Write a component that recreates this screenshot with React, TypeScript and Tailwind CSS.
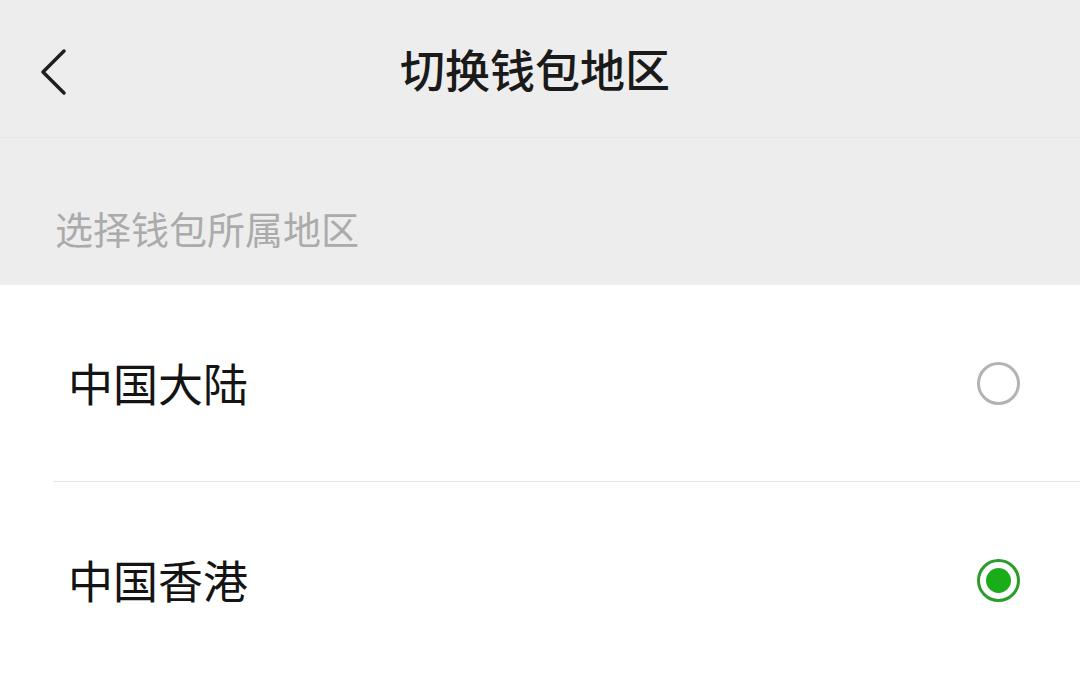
const regions = [
  { name: '中国大陆', selected: false },
  { name: '中国香港', selected: true },
]

function BackIcon() {
  return (
    <svg width="30" height="48" viewBox="0 0 30 48" fill="none">
      <path d="M26 3 L5 24 L26 45" stroke="#1f1f1f" strokeWidth="3.5" strokeLinecap="round" strokeLinejoin="round" />
    </svg>
  )
}

function Radio({ selected }: { selected: boolean }) {
  if (selected) {
    return (
      <div className="flex h-[43px] w-[43px] items-center justify-center rounded-full border-[3px] border-[#2a9d2a]">
        <div className="h-[25px] w-[25px] rounded-full bg-[#1aad19]" />
      </div>
    )
  }
  return <div className="h-[43px] w-[43px] rounded-full border-[3px] border-[#b3b3b3]" />
}

export default function App() {
  return (
    <div
      className="flex h-[674px] w-[1080px] flex-col overflow-hidden bg-[#ededed]"
      style={{ fontFamily: '"Noto Sans CJK SC", "Noto Sans", sans-serif' }}
    >
      <div className="relative flex h-[138px] shrink-0 items-center justify-center border-b border-[#e6e6e6] pr-[10px]">
        <button className="absolute left-[38px] top-[48px]">
          <BackIcon />
        </button>
        <h1 className="text-[45px] font-medium text-[#1a1a1a]">切换钱包地区</h1>
      </div>

      <div className="flex h-[147px] shrink-0 items-end pb-[38px] pl-[55px]">
        <p className="text-[38px] leading-none text-[#ababab]">选择钱包所属地区</p>
      </div>

      <div className="flex-1 bg-white">
        {regions.map((r, i) => (
          <div key={r.name} className={i > 0 ? 'border-t border-[#e8e8e8] ml-[53px]' : 'ml-[53px]'}>
            <div className="flex h-[196px] items-center justify-between pl-[15px] pr-[60px]">
              <span className="text-[45px] text-[#141414]">{r.name}</span>
              <Radio selected={r.selected} />
            </div>
          </div>
        ))}
      </div>
    </div>
  )
}
